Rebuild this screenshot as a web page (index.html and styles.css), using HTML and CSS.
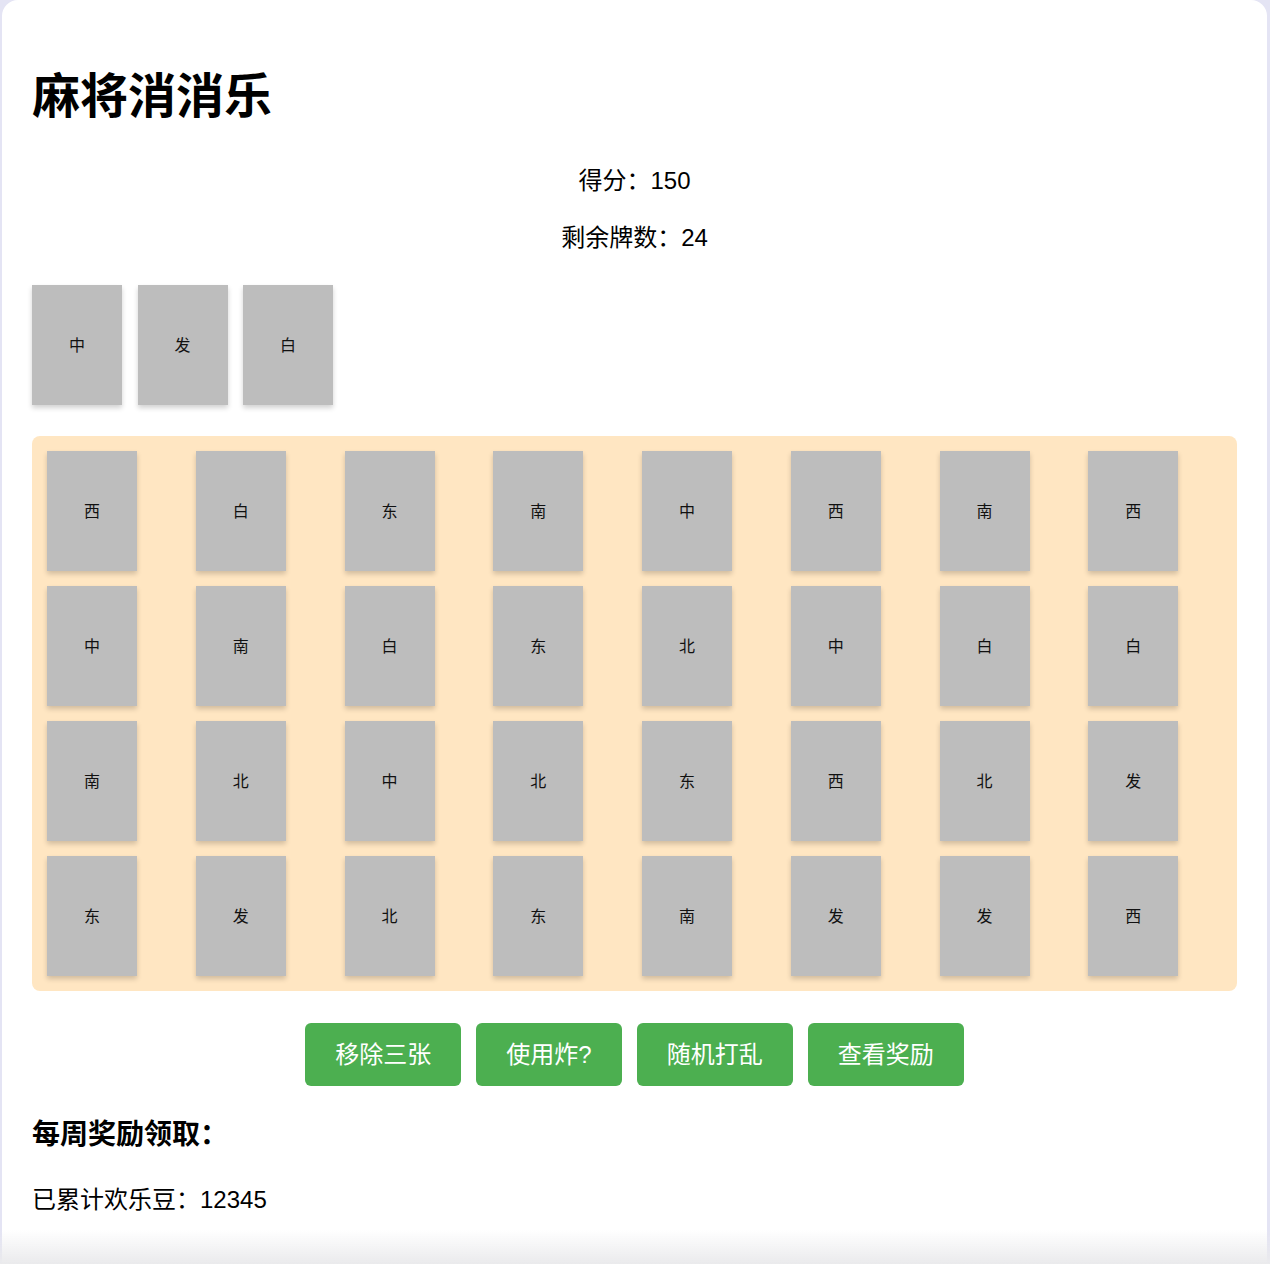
FILE: index.html
```html
<!DOCTYPE html>
<html lang="zh-CN">
<head>
<meta charset="utf-8">
<title>麻将消消乐</title>
<link rel="stylesheet" href="styles.css">
</head>
<body>
<div class="card">
  <h1 class="title">麻将消消乐</h1>
  <p class="stat stat-score">得分：150</p>
  <p class="stat stat-left">剩余牌数：24</p>
  <div class="selected">
    <div class="tile">中</div>
    <div class="tile">发</div>
    <div class="tile">白</div>
  </div>
  <div class="board">
    <div class="tile">西</div><div class="tile">白</div><div class="tile">东</div><div class="tile">南</div><div class="tile">中</div><div class="tile">西</div><div class="tile">南</div><div class="tile">西</div>
    <div class="tile">中</div><div class="tile">南</div><div class="tile">白</div><div class="tile">东</div><div class="tile">北</div><div class="tile">中</div><div class="tile">白</div><div class="tile">白</div>
    <div class="tile">南</div><div class="tile">北</div><div class="tile">中</div><div class="tile">北</div><div class="tile">东</div><div class="tile">西</div><div class="tile">北</div><div class="tile">发</div>
    <div class="tile">东</div><div class="tile">发</div><div class="tile">北</div><div class="tile">东</div><div class="tile">南</div><div class="tile">发</div><div class="tile">发</div><div class="tile">西</div>
  </div>
  <div class="actions">
    <button class="btn">移除三张</button>
    <button class="btn">使用炸?</button>
    <button class="btn">随机打乱</button>
    <button class="btn">查看奖励</button>
  </div>
  <h3 class="reward-title">每周奖励领取：</h3>
  <p class="reward-text">已累计欢乐豆：12345</p>
</div>
</body>
</html>
```
FILE: styles.css
```css
html, body {
  margin: 0;
  padding: 0;
}

body {
  background: #e4e4f4;
  font-family: "Liberation Sans", "Noto Sans CJK SC", sans-serif;
  font-size: 24px;
  color: #000;
}

body::after {
  content: "";
  position: fixed;
  left: 0;
  right: 0;
  bottom: 0;
  height: 34px;
  background: linear-gradient(to bottom, rgba(236, 236, 238, 0), rgba(234, 234, 236, 1));
  pointer-events: none;
}

.card {
  background: #ffffff;
  margin: 0 3px 0 2px;
  border-radius: 16px 16px 0 0;
  padding: 1px 30px 60px 30px;
  min-height: 1203px;
}

.title {
  font-size: 48px;
  line-height: 56px;
  font-weight: 700;
  margin: 68px 0 0 0;
}

.stat {
  text-align: center;
  line-height: 32px;
  margin: 0;
}

.stat-score {
  margin-top: 40px;
}

.stat-left {
  margin-top: 25px;
}

.selected {
  display: flex;
  gap: 15.5px;
  margin: 31px 0 0 0;
}

.tile {
  width: 90px;
  height: 120px;
  box-sizing: border-box;
  padding-bottom: 3px;
  background: #bdbdbd;
  display: flex;
  align-items: center;
  justify-content: center;
  font-size: 16px;
  color: #111;
  box-shadow: 0 3px 5px rgba(0, 0, 0, 0.18);
}

.board {
  margin: 31px 0 0 0;
  background: #ffe6c2;
  border-radius: 8px;
  padding: 15px;
  display: grid;
  grid-template-columns: repeat(8, 1fr);
  gap: 15px;
}

.actions {
  display: flex;
  justify-content: center;
  gap: 15px;
  margin-top: 32px;
}

.btn {
  background: #4caf50;
  color: #ffffff;
  border: none;
  border-radius: 6px;
  height: 63px;
  padding: 0 30px;
  font-family: "Liberation Sans", "Noto Sans CJK SC", sans-serif;
  font-size: 24px;
  line-height: 32px;
  cursor: pointer;
}

.reward-title {
  font-size: 28px;
  line-height: 36px;
  font-weight: 700;
  margin: 31px 0 0 0;
}

.reward-text {
  line-height: 32px;
  margin: 31px 0 0 0;
}
```
